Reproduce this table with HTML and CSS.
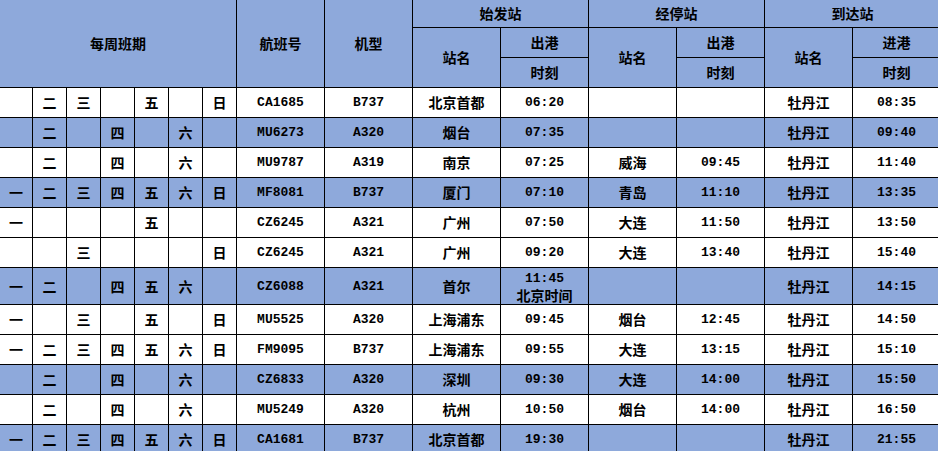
FILE: index.html
```html
<!DOCTYPE html>
<html lang="zh-CN">
<head>
<meta charset="utf-8">
<title>航班时刻表</title>
<link rel="stylesheet" href="styles.css">
</head>
<body>
<table class="sched">
  <colgroup>
    <col class="c-day0"><col class="c-day"><col class="c-day"><col class="c-day"><col class="c-day"><col class="c-day"><col class="c-day">
    <col class="c-w"><col class="c-w"><col class="c-w"><col class="c-w"><col class="c-w"><col class="c-w"><col class="c-w"><col class="c-w">
  </colgroup>
  <thead>
    <tr class="h1">
      <th colspan="7" rowspan="3">每周班期</th>
      <th rowspan="3">航班号</th>
      <th rowspan="3">机型</th>
      <th colspan="2">始发站</th>
      <th colspan="2">经停站</th>
      <th colspan="2">到达站</th>
    </tr>
    <tr class="h2">
      <th rowspan="2">站名</th><th>出港</th>
      <th rowspan="2">站名</th><th>出港</th>
      <th rowspan="2">站名</th><th>进港</th>
    </tr>
    <tr class="h3">
      <th>时刻</th><th>时刻</th><th>时刻</th>
    </tr>
  </thead>
  <tbody>
    <tr class="w"><td></td><td>二</td><td>三</td><td></td><td>五</td><td></td><td>日</td><td class="m">CA1685</td><td class="m">B737</td><td>北京首都</td><td class="m">06:20</td><td></td><td></td><td>牡丹江</td><td class="m">08:35</td></tr>
    <tr class="b"><td></td><td>二</td><td></td><td>四</td><td></td><td>六</td><td></td><td class="m">MU6273</td><td class="m">A320</td><td>烟台</td><td class="m">07:35</td><td></td><td></td><td>牡丹江</td><td class="m">09:40</td></tr>
    <tr class="w"><td></td><td>二</td><td></td><td>四</td><td></td><td>六</td><td></td><td class="m">MU9787</td><td class="m">A319</td><td>南京</td><td class="m">07:25</td><td>威海</td><td class="m">09:45</td><td>牡丹江</td><td class="m">11:40</td></tr>
    <tr class="b"><td>一</td><td>二</td><td>三</td><td>四</td><td>五</td><td>六</td><td>日</td><td class="m">MF8081</td><td class="m">B737</td><td>厦门</td><td class="m">07:10</td><td>青岛</td><td class="m">11:10</td><td>牡丹江</td><td class="m">13:35</td></tr>
    <tr class="w"><td>一</td><td></td><td></td><td></td><td>五</td><td></td><td></td><td class="m">CZ6245</td><td class="m">A321</td><td>广州</td><td class="m">07:50</td><td>大连</td><td class="m">11:50</td><td>牡丹江</td><td class="m">13:50</td></tr>
    <tr class="w"><td></td><td></td><td>三</td><td></td><td></td><td></td><td>日</td><td class="m">CZ6245</td><td class="m">A321</td><td>广州</td><td class="m">09:20</td><td>大连</td><td class="m">13:40</td><td>牡丹江</td><td class="m">15:40</td></tr>
    <tr class="b tall"><td>一</td><td>二</td><td></td><td>四</td><td>五</td><td>六</td><td></td><td class="m">CZ6088</td><td class="m">A321</td><td>首尔</td><td class="two"><span class="m">11:45</span><br>北京时间</td><td></td><td></td><td>牡丹江</td><td class="m">14:15</td></tr>
    <tr class="w"><td>一</td><td></td><td>三</td><td></td><td>五</td><td></td><td>日</td><td class="m">MU5525</td><td class="m">A320</td><td>上海浦东</td><td class="m">09:45</td><td>烟台</td><td class="m">12:45</td><td>牡丹江</td><td class="m">14:50</td></tr>
    <tr class="w"><td>一</td><td>二</td><td>三</td><td>四</td><td>五</td><td>六</td><td>日</td><td class="m">FM9095</td><td class="m">B737</td><td>上海浦东</td><td class="m">09:55</td><td>大连</td><td class="m">13:15</td><td>牡丹江</td><td class="m">15:10</td></tr>
    <tr class="b"><td></td><td>二</td><td></td><td>四</td><td></td><td>六</td><td></td><td class="m">CZ6833</td><td class="m">A320</td><td>深圳</td><td class="m">09:30</td><td>大连</td><td class="m">14:00</td><td>牡丹江</td><td class="m">15:50</td></tr>
    <tr class="w"><td></td><td>二</td><td></td><td>四</td><td></td><td>六</td><td></td><td class="m">MU5249</td><td class="m">A320</td><td>杭州</td><td class="m">10:50</td><td>烟台</td><td class="m">14:00</td><td>牡丹江</td><td class="m">16:50</td></tr>
    <tr class="b"><td>一</td><td>二</td><td>三</td><td>四</td><td>五</td><td>六</td><td>日</td><td class="m">CA1681</td><td class="m">B737</td><td>北京首都</td><td class="m">19:30</td><td></td><td></td><td>牡丹江</td><td class="m">21:55</td></tr>
  </tbody>
</table>
</body>
</html>
```

FILE: styles.css
```css
html, body {
  margin: 0;
  padding: 0;
  overflow: hidden;
  background: #ffffff;
}

.sched {
  border-collapse: separate;
  border-spacing: 0;
  table-layout: fixed;
  width: 941px;
  font-family: "Noto Sans CJK SC", "Liberation Sans", sans-serif;
  font-weight: 700;
  font-size: 14px;
  color: #000;
}

.c-day0 { width: 33px; }
.c-day { width: 34px; }
.c-w { width: 88px; }

.sched th,
.sched td {
  box-sizing: border-box;
  padding: 0;
  border-right: 1px solid #000;
  border-bottom: 1px solid #000;
  text-align: center;
  vertical-align: middle;
  line-height: 17px;
  white-space: nowrap;
  overflow: hidden;
}

.sched th {
  background: #8ea9db;
  font-weight: 700;
}

.h1 { height: 28px; }
.h2 { height: 30px; }
.h3 { height: 30px; }

.sched tbody tr { height: 30px; }
.sched tbody tr.tall { height: 37px; }

.w td { background: #ffffff; }
.b td { background: #8ea9db; }

.m {
  font-family: "Liberation Mono", "Noto Sans CJK SC", monospace;
  font-size: 13px;
  font-weight: 700;
}
```
